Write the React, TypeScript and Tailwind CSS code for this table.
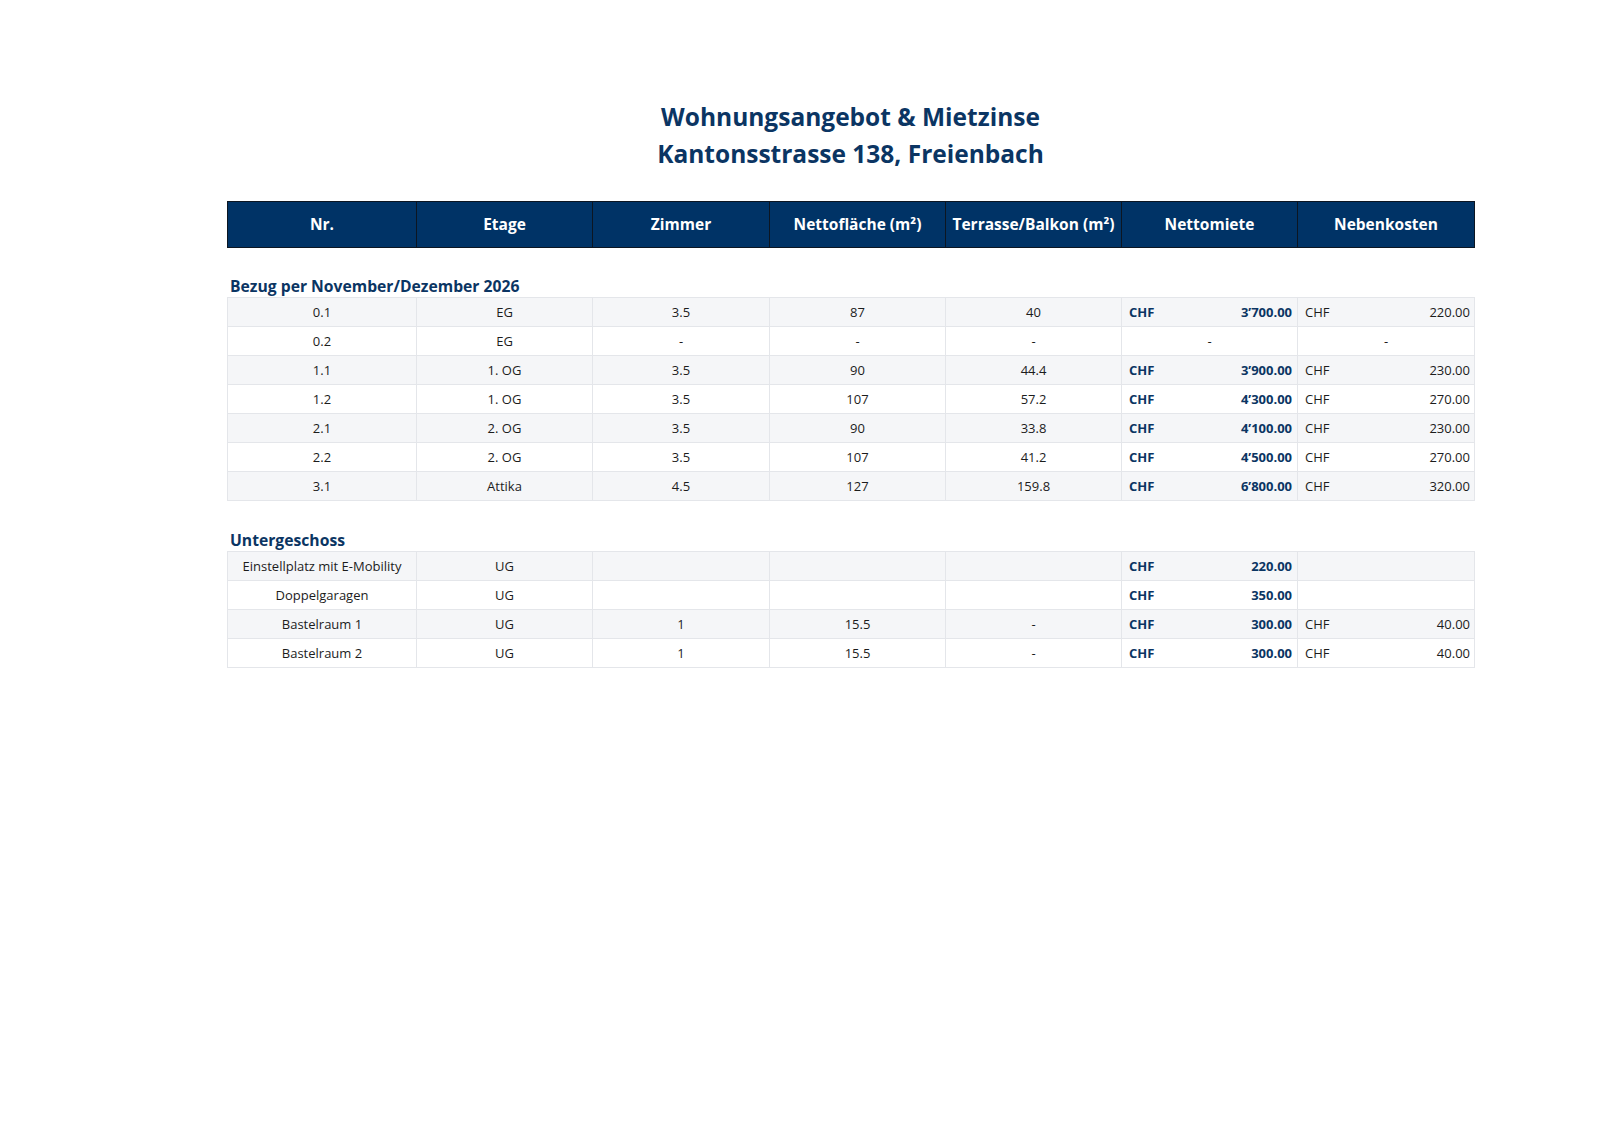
import React from "react";

type Row = {
  nr: string;
  etage: string;
  zimmer: string;
  flaeche: string;
  terrasse: string;
  miete: string | null; // null = "-" centered, "" = empty
  neben: string | null;
};

const WOHNUNGEN: Row[] = [
  { nr: "0.1", etage: "EG", zimmer: "3.5", flaeche: "87", terrasse: "40", miete: "3’700.00", neben: "220.00" },
  { nr: "0.2", etage: "EG", zimmer: "-", flaeche: "-", terrasse: "-", miete: null, neben: null },
  { nr: "1.1", etage: "1. OG", zimmer: "3.5", flaeche: "90", terrasse: "44.4", miete: "3’900.00", neben: "230.00" },
  { nr: "1.2", etage: "1. OG", zimmer: "3.5", flaeche: "107", terrasse: "57.2", miete: "4’300.00", neben: "270.00" },
  { nr: "2.1", etage: "2. OG", zimmer: "3.5", flaeche: "90", terrasse: "33.8", miete: "4’100.00", neben: "230.00" },
  { nr: "2.2", etage: "2. OG", zimmer: "3.5", flaeche: "107", terrasse: "41.2", miete: "4’500.00", neben: "270.00" },
  { nr: "3.1", etage: "Attika", zimmer: "4.5", flaeche: "127", terrasse: "159.8", miete: "6’800.00", neben: "320.00" },
];

const UNTERGESCHOSS: Row[] = [
  { nr: "Einstellplatz mit E-Mobility", etage: "UG", zimmer: "", flaeche: "", terrasse: "", miete: "220.00", neben: "" },
  { nr: "Doppelgaragen", etage: "UG", zimmer: "", flaeche: "", terrasse: "", miete: "350.00", neben: "" },
  { nr: "Bastelraum 1", etage: "UG", zimmer: "1", flaeche: "15.5", terrasse: "-", miete: "300.00", neben: "40.00" },
  { nr: "Bastelraum 2", etage: "UG", zimmer: "1", flaeche: "15.5", terrasse: "-", miete: "300.00", neben: "40.00" },
];

const HEADERS = ["Nr.", "Etage", "Zimmer", "Nettofläche (m²)", "Terrasse/Balkon (m²)", "Nettomiete", "Nebenkosten"];

function Cols() {
  return (
    <colgroup>
      <col className="w-[189px]" />
      <col className="w-[176px]" />
      <col className="w-[177px]" />
      <col className="w-[176px]" />
      <col className="w-[176px]" />
      <col className="w-[176px]" />
      <col className="w-[177px]" />
    </colgroup>
  );
}

function DataTable({ rows }: { rows: Row[] }) {
  const td = "border border-[#e4e6ea] h-[29px] p-0 pt-[1px] text-center align-middle";
  return (
    <table className="w-full table-fixed border-collapse text-[13px] text-[#1c1c1c]">
      <Cols />
      <tbody>
        {rows.map((r, i) => (
          <tr key={r.nr} className={i % 2 === 0 ? "bg-[#f5f6f8]" : "bg-white"}>
            <td className={td}>{r.nr}</td>
            <td className={td}>{r.etage}</td>
            <td className={td}>{r.zimmer}</td>
            <td className={td}>{r.flaeche}</td>
            <td className={td}>{r.terrasse}</td>
            <td className={td}>
              {r.miete === null ? (
                "-"
              ) : r.miete === "" ? null : (
                <div className="flex justify-between pl-[7px] pr-[5px] font-bold text-[#0b3563]">
                  <span>CHF</span>
                  <span>{r.miete}</span>
                </div>
              )}
            </td>
            <td className={td}>
              {r.neben === null ? (
                "-"
              ) : r.neben === "" ? null : (
                <div className="flex justify-between pl-[7px] pr-[4px]">
                  <span>CHF</span>
                  <span>{r.neben}</span>
                </div>
              )}
            </td>
          </tr>
        ))}
      </tbody>
    </table>
  );
}

export default function App() {
  return (
    <div className="min-h-[1132px] bg-white pt-[98px] font-['Open_Sans',sans-serif]">
      <div className="ml-[227px] w-[1247px]">
        {/* Titel */}
        <div className="text-center text-[24.5px] font-bold leading-[37px] text-[#0b3563]">
          <div>Wohnungsangebot &amp; Mietzinse</div>
          <div>Kantonsstrasse 138, Freienbach</div>
        </div>

        {/* Kopfzeile */}
        <table className="mt-[29px] w-full table-fixed border-collapse">
          <Cols />
          <thead>
            <tr className="bg-[#003366]">
              {HEADERS.map((h) => (
                <th
                  key={h}
                  className="h-[46px] border-[1.5px] border-[#0c1622] p-0 text-center align-middle text-[15.5px] font-bold text-white"
                >
                  {h}
                </th>
              ))}
            </tr>
          </thead>
        </table>

        {/* Bezug */}
        <h2 className="mt-[27px] pl-[3px] text-[15.7px] font-bold leading-[22px] text-[#0b3563]">
          Bezug per November/Dezember 2026
        </h2>
        <DataTable rows={WOHNUNGEN} />

        {/* Untergeschoss */}
        <h2 className="mt-[28px] pl-[3px] text-[15.7px] font-bold leading-[22px] text-[#0b3563]">
          Untergeschoss
        </h2>
        <DataTable rows={UNTERGESCHOSS} />
      </div>
    </div>
  );
}
